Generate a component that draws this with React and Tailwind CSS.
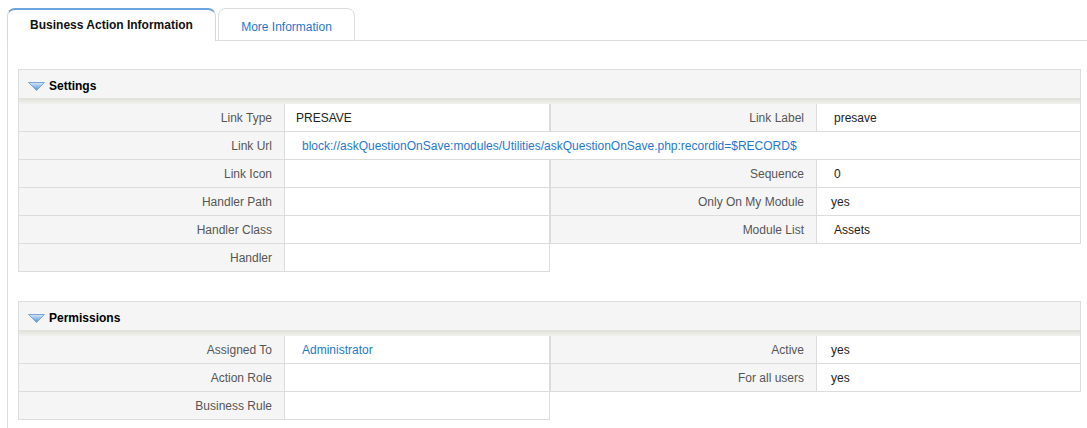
import React from 'react';

const font = { fontFamily: '"Liberation Sans", Arial, sans-serif' };

function Triangle() {
  return (
    <svg width="17" height="9" viewBox="0 0 17 9" className="shrink-0">
      <defs>
        <linearGradient id="tri" x1="0" y1="0" x2="0" y2="1">
          <stop offset="0" stopColor="#d6e8fa" />
          <stop offset="1" stopColor="#4f8fd4" />
        </linearGradient>
      </defs>
      <polygon points="0.5,0.5 16.5,0.5 8.5,8.5" fill="url(#tri)" stroke="#7aa7d6" strokeWidth="1" />
    </svg>
  );
}

function BlockHeader({ title }) {
  return (
    <div className="w-[1063px] border-x border-t border-[#dcdcdc] bg-[#f5f5f5]">
      <div className="h-[28px] flex items-center gap-[4px] pl-[9px] pt-[4px]">
        <Triangle />
        <span className="text-[12px] font-bold text-black">{title}</span>
      </div>
      <div className="h-[6px] bg-gradient-to-b from-[#e0e0da] to-[#f1f1ee]" />
    </div>
  );
}

function Label({ children }) {
  return (
    <div className="h-[28px] w-[267px] shrink-0 flex items-center justify-end pr-[12px] bg-[#f5f5f5] border-b border-r border-l border-[#dcdcdc] text-[12px] text-[#555]">
      {children}
    </div>
  );
}

function Value({ children, w, pl = 'pl-[17px]', link }) {
  return (
    <div
      className={`h-[28px] shrink-0 flex items-center ${pl} ${w} bg-white border-b border-r border-[#dcdcdc] text-[12px] ${
        link ? 'text-[#1f78cf]' : 'text-[#222]'
      }`}
    >
      {children}
    </div>
  );
}

function Row({ l1, v1, l2, v2, pl1, pl2, link1 }) {
  return (
    <div className="flex">
      <Label>{l1}</Label>
      <Value w="w-[265px]" pl={pl1} link={link1}>{v1}</Value>
      {l2 !== undefined && (
        <>
          <Label>{l2}</Label>
          <Value w="w-[264px]" pl={pl2}>{v2}</Value>
        </>
      )}
    </div>
  );
}

export default function App() {
  return (
    <div className="w-[1087px] h-[428px] bg-white overflow-hidden pl-[7px] pt-[8px]" style={font}>
      <div className="flex items-end">
        <div className="w-[209px] h-[33px] shrink-0 border-x border-t-2 border-[#d8d8d8] border-t-[#6aa5e2] rounded-t-[8px] bg-white flex justify-center pt-[6px]">
          <span className="text-[12px] font-bold text-[#111]">Business Action Information</span>
        </div>
        <div className="w-[2px] h-[1px] bg-[#dcdcdc]" />
        <div className="w-[137px] h-[33px] shrink-0 border border-[#dcdcdc] rounded-t-[8px] bg-white flex justify-center pt-[9px]">
          <span className="text-[12px] text-[#1f78cf]">More Information</span>
        </div>
        <div className="flex-1 h-[1px] bg-[#dcdcdc]" />
      </div>

      <div className="border-l border-[#dcdcdc] pl-[10px] pt-[28px] h-[400px]">
        <BlockHeader title="Settings" />
        <Row l1="Link Type" v1="PRESAVE" pl1="pl-[11px]" l2="Link Label" v2="presave" />
        <div className="flex">
          <Label>Link Url</Label>
          <Value w="w-[796px]" link>
            block://askQuestionOnSave:modules/Utilities/askQuestionOnSave.php:recordid=$RECORD$
          </Value>
        </div>
        <Row l1="Link Icon" v1="" l2="Sequence" v2="0" />
        <Row l1="Handler Path" v1="" l2="Only On My Module" v2="yes" pl2="pl-[14px]" />
        <Row l1="Handler Class" v1="" l2="Module List" v2="Assets" />
        <Row l1="Handler" v1="" />

        <div className="mt-[29px]">
          <BlockHeader title="Permissions" />
          <Row l1="Assigned To" v1="Administrator" link1 l2="Active" v2="yes" pl2="pl-[14px]" />
          <Row l1="Action Role" v1="" l2="For all users" v2="yes" pl2="pl-[14px]" />
          <Row l1="Business Rule" v1="" />
        </div>
      </div>
    </div>
  );
}
